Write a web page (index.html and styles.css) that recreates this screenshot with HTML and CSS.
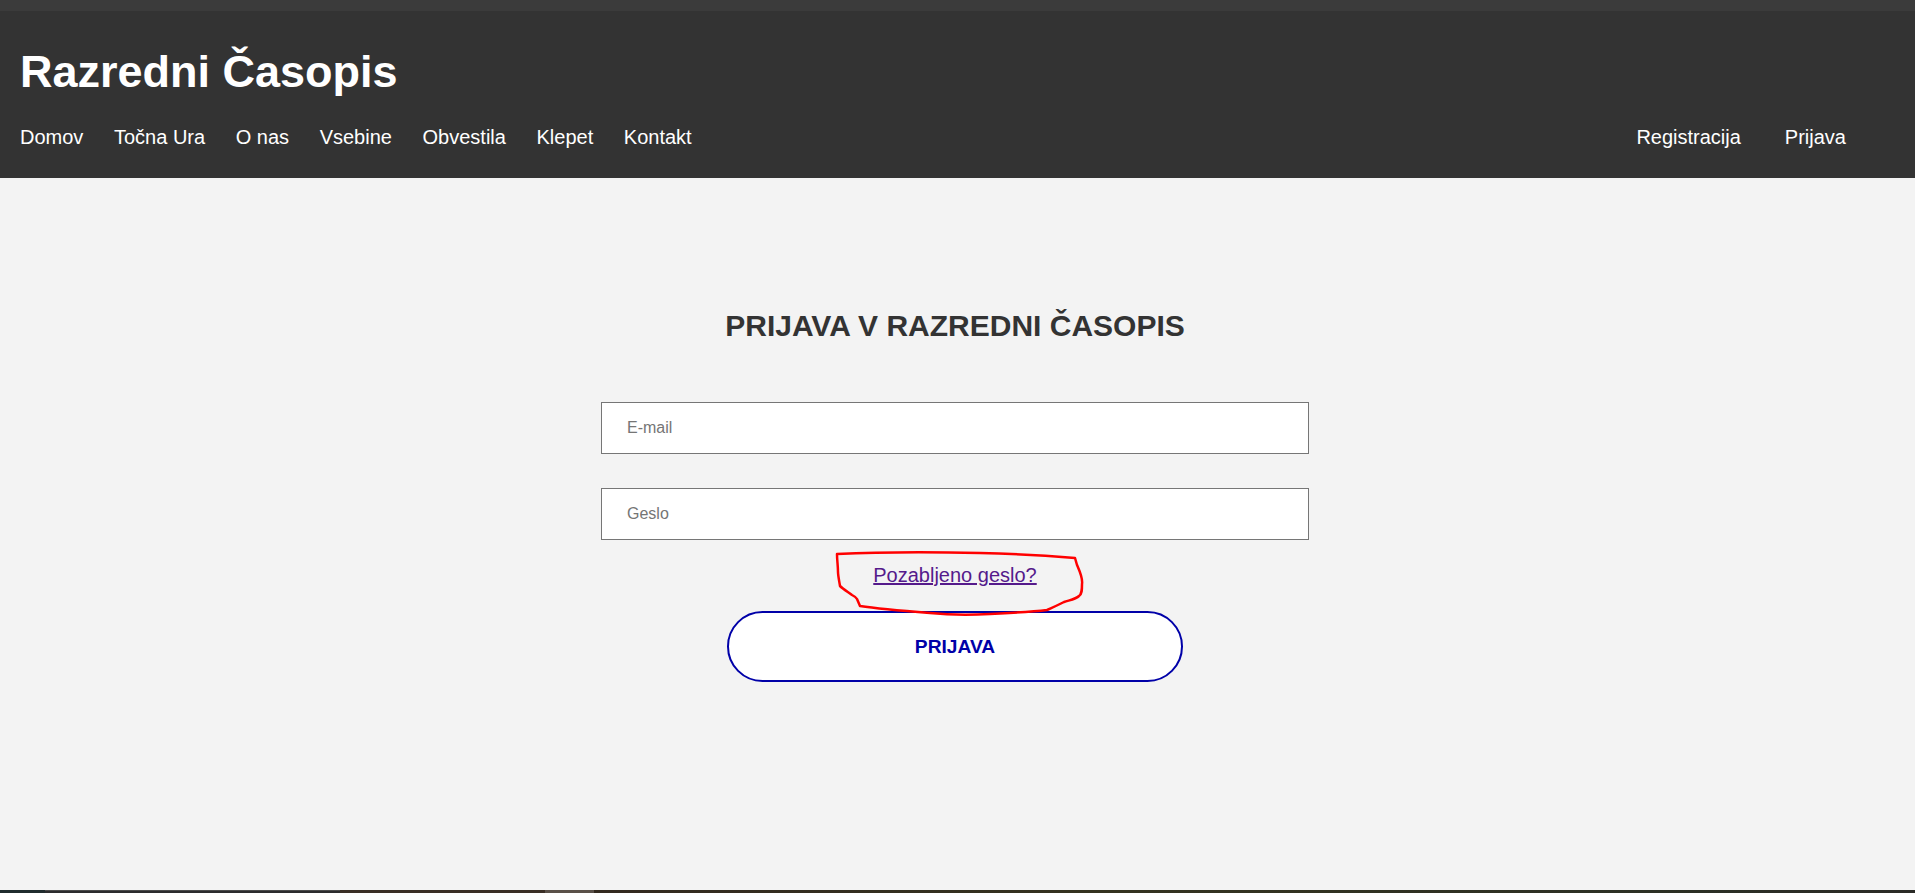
FILE: index.html
```html
<!DOCTYPE html>
<html lang="sl">
<head>
<meta charset="utf-8">
<title>Prijava - Razredni Časopis</title>
<link rel="stylesheet" href="styles.css">
</head>
<body>
<div class="page">
  <div class="topstrip"></div>
  <header class="site-header">
    <h1 class="site-title">Razredni Časopis</h1>
    <nav class="nav">
      <ul class="nav-left">
        <li><a href="#">Domov</a></li>
        <li><a href="#">Točna Ura</a></li>
        <li><a href="#">O nas</a></li>
        <li><a href="#">Vsebine</a></li>
        <li><a href="#">Obvestila</a></li>
        <li><a href="#">Klepet</a></li>
        <li><a href="#">Kontakt</a></li>
      </ul>
      <ul class="nav-right">
        <li><a href="#">Registracija</a></li>
        <li><a href="#">Prijava</a></li>
      </ul>
    </nav>
  </header>
  <main class="main">
    <h2 class="login-title">PRIJAVA V RAZREDNI ČASOPIS</h2>
    <form class="login-form" onsubmit="return false">
      <input class="field" type="email" placeholder="E-mail">
      <input class="field field-pass" type="password" placeholder="Geslo">
      <a class="forgot" href="#">Pozabljeno geslo?</a>
      <button class="submit" type="submit">PRIJAVA</button>
    </form>
  </main>
  <div class="taskbar">
    <span class="tb tb1"></span>
    <span class="tb tb2"></span>
    <span class="tb tb3"></span>
    <span class="tb tb4"></span>
    <span class="tb tb5"></span>
  </div>
  <svg class="scribble" width="1915" height="893" viewBox="0 0 1915 893" aria-hidden="true">
    <path d="M837 554 C880 552 933 552 980 553 C1020 554 1050 556 1075 558 L1077 565 C1080 572 1083 578 1082 584 C1082 590 1082 594 1079 596 C1076 599 1070 600 1064 602 C1058 605 1054 607 1047 610 C1030 612 1010 613 990 614 C970 615 950 615 930 613 C905 611 880 609 860 606 L857 599 C856 597 854 596 852 595 C848 592 843 589 840 586 C839 580 838 575 838 572 C838 566 837 560 837 554 Z" />
  </svg>
</div>
</body>
</html>
```

FILE: styles.css
```css
* { box-sizing: border-box; }

html, body {
  margin: 0;
  padding: 0;
}

body {
  font-family: "Liberation Sans", Arial, sans-serif;
  background: #f3f3f3;
  color: #333;
}

.page {
  position: relative;
  display: flex;
  flex-direction: column;
  height: 893px;
  overflow: hidden;
}

.topstrip {
  height: 11px;
  background: #3b3b3b;
  flex: none;
}

.site-header {
  background: #333333;
  padding: 35px 69px 29px 20px;
  flex: none;
}

.site-title {
  margin: 0;
  font-size: 45px;
  line-height: 52px;
  font-weight: bold;
  color: #ffffff;
}

.nav {
  display: flex;
  justify-content: space-between;
  margin-top: 27px;
}

.nav ul {
  list-style: none;
  margin: 0;
  padding: 0;
  display: flex;
}

.nav-left { gap: 30.6px; }
.nav-right { gap: 44px; }

.nav a {
  color: #ffffff;
  text-decoration: none;
  font-size: 20px;
  line-height: 24px;
  display: block;
}

.main {
  flex: 1;
  display: flex;
  flex-direction: column;
  align-items: center;
  padding: 130px 5px 0 0;
}

.login-title {
  margin: 0;
  font-size: 30px;
  line-height: 36px;
  font-weight: bold;
  color: #333333;
}

.login-form {
  width: 708px;
  margin-top: 58px;
  display: flex;
  flex-direction: column;
  align-items: center;
}

.field {
  width: 100%;
  height: 52px;
  border: 1px solid #767676;
  border-radius: 0;
  background: #ffffff;
  padding: 0 25px;
  font-family: "Liberation Sans", Arial, sans-serif;
  font-size: 16px;
  color: #333;
  outline: none;
}

.field::placeholder { color: #757575; }

.field-pass { margin-top: 34px; }

.forgot {
  margin-top: 23px;
  font-size: 20px;
  line-height: 24px;
  color: #551a8b;
  text-decoration: underline;
}

.submit {
  margin-top: 24px;
  width: 456px;
  height: 71px;
  border: 2px solid #0000a8;
  border-radius: 36px;
  background: #ffffff;
  color: #0000a8;
  font-family: "Liberation Sans", Arial, sans-serif;
  font-size: 19.2px;
  font-weight: bold;
  cursor: pointer;
}

.taskbar {
  height: 3px;
  flex: none;
  display: flex;
}

.tb { display: block; height: 100%; }
.tb1 { width: 45px; background: #1f2b2d; }
.tb2 { width: 295px; background: #2b2b2d; border-top: 1px solid #4a4a4a; }
.tb3 { width: 205px; background: #3a2e25; }
.tb4 { width: 49px; background: #5a5048; }
.tb5 { flex: 1; background: linear-gradient(90deg, #33291f, #34321f 40%, #2c3024 80%, #2a2a26); }

.scribble {
  position: absolute;
  left: 0;
  top: 0;
  pointer-events: none;
}

.scribble path {
  fill: none;
  stroke: #ff0000;
  stroke-width: 2.5;
  stroke-linejoin: round;
}
```
